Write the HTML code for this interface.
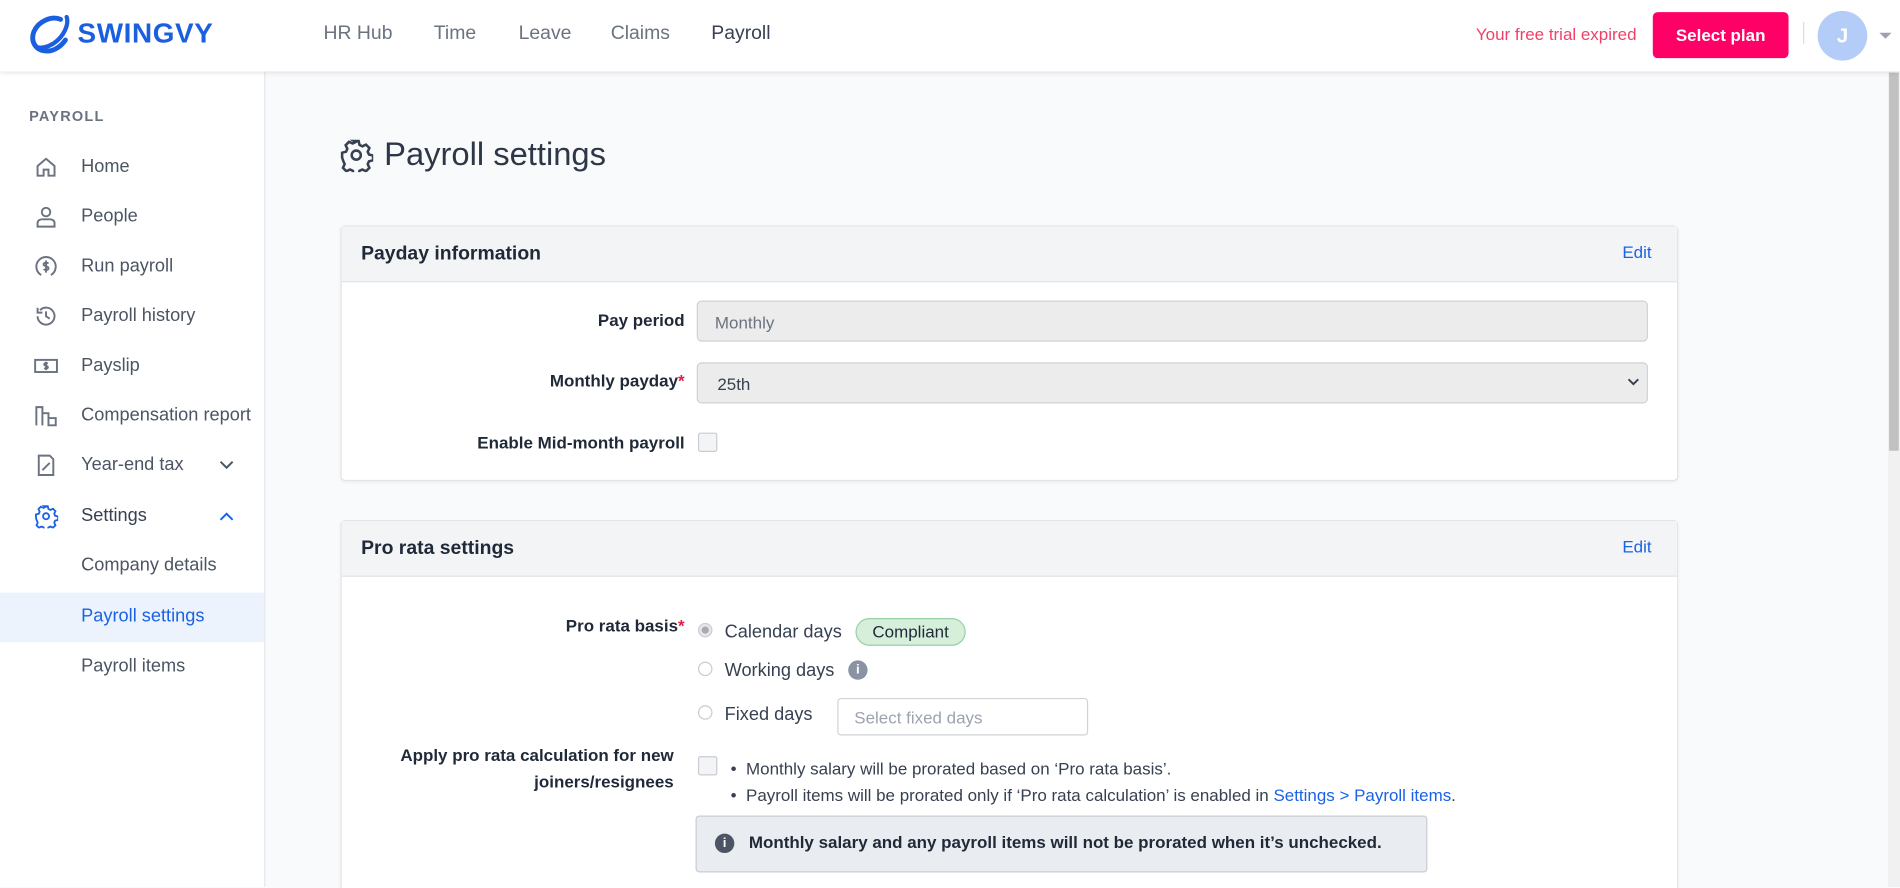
<!DOCTYPE html>
<html><head><meta charset="utf-8"><style>
*{box-sizing:border-box;margin:0;padding:0}
html,body{width:1900px;height:888px;overflow:hidden;background:#f9fafb;font-family:"Liberation Sans",Arial,sans-serif}
#w{position:absolute;left:0;top:0;width:1568px;height:732.8px;overflow:hidden;transform:scale(1.21173);transform-origin:0 0;background:#f9fafb}
.a{position:absolute;white-space:nowrap}
.hdr{position:absolute;left:0;top:0;width:1568px;height:59px;background:#fff;box-shadow:0 1px 4px rgba(0,0,0,.12);z-index:2}
.nav{font-size:16px;color:#6b7280;top:19px}
.side{position:absolute;left:0;top:59px;width:219px;height:673px;background:#fff;border-right:1px solid #e5e7eb}
.si{font-size:15px;color:#4b5563;left:67px}
.ic{position:absolute;left:28px;width:20px;height:20px}
.card{position:absolute;left:281px;width:1104px;background:#fff;border:1px solid #e2e4e8;border-radius:4px;box-shadow:0 1px 2px rgba(0,0,0,.05)}
.ch{height:46px;background:#f3f4f6;border-bottom:1px solid #e2e4e8;position:relative}
.ct{position:absolute;left:16px;top:14px;font-size:16px;font-weight:bold;color:#1f2937}
.ed{position:absolute;right:21px;top:13px;font-size:14px;color:#1a62e6}
.lb{font-size:14px;font-weight:bold;color:#1f2937;text-align:right}
.st{color:#e11d48}
.cb{position:absolute;width:16px;height:16px;border:1px solid #c9ccd2;background:#f3f4f6;border-radius:2px}
.rd{position:absolute;width:12px;height:12px;border:1px solid #c9ccd2;border-radius:50%;background:#fff}
.tx{font-size:15px;color:#374151}
</style></head><body><div id="w">
<div class="hdr">
 <svg class="a" style="left:24px;top:12px" width="36" height="34" viewBox="0 0 36 34"><path d="M26 4C19 1 8 5 4 14c-3 8 1 15 9 16 6 1 13-3 17-9" fill="none" stroke="#1a5fe0" stroke-width="4" stroke-linecap="round"/><path d="M31 2c2 6-2 16-11 22-5 3-10 4-13 3" fill="none" stroke="#1a5fe0" stroke-width="3.5" stroke-linecap="round"/></svg>
 <div class="a" style="left:64px;top:14px;font-size:23px;font-weight:bold;color:#1a5fe0;letter-spacing:0.5px">SWINGVY</div>
 <div class="a nav" style="left:267px">HR Hub</div>
 <div class="a nav" style="left:358px">Time</div>
 <div class="a nav" style="left:428px">Leave</div>
 <div class="a nav" style="left:504px">Claims</div>
 <div class="a nav" style="left:587px;color:#374151">Payroll</div>
 <div class="a" style="left:1218px;top:20px;font-size:14px;color:#f0406a">Your free trial expired</div>
 <div class="a" style="left:1364px;top:10px;width:112px;height:38px;background:#ff0066;border-radius:4px;color:#fff;font-size:14px;font-weight:bold;text-align:center;line-height:38px">Select plan</div>
 <div class="a" style="left:1488px;top:18px;width:1px;height:18px;background:#d8dce2"></div>
 <div class="a" style="left:1500px;top:9px;width:41px;height:41px;border-radius:50%;background:#b4cdf8;color:#fff;font-size:17px;font-weight:bold;text-align:center;line-height:41px">J</div>
 <div class="a" style="left:1551px;top:27px;width:0;height:0;border-left:5px solid transparent;border-right:5px solid transparent;border-top:5px solid #9ca3af"></div>
</div>
<div class="a" style="left:1558px;top:59px;width:10px;height:673px;background:#f1f1f1"></div>
<div class="a" style="left:1559px;top:60px;width:8px;height:312px;background:#c1c1c1"></div>
<div class="side">
 <div class="a" style="left:24px;top:30px;font-size:12px;font-weight:bold;color:#6b7280;letter-spacing:1px">PAYROLL</div>
 <svg class="ic" style="top:69px" viewBox="0 0 20 20" fill="none" stroke="#6b7280" stroke-width="1.6"><path d="M3 9l7-6 7 6v8h-5v-5H8v5H3z"/></svg>
 <div class="a si" style="top:70px">Home</div>
 <svg class="ic" style="top:110px" viewBox="0 0 20 20" fill="none" stroke="#6b7280" stroke-width="1.6"><circle cx="10" cy="6" r="3.5"/><path d="M3 18v-3c0-2 2-3 4-3h6c2 0 4 1 4 3v3z"/></svg>
 <div class="a si" style="top:111px">People</div>
 <svg class="ic" style="top:151px" viewBox="0 0 20 20" fill="none" stroke="#6b7280" stroke-width="1.6"><path d="M14 17a8 8 0 1 0-8 0"/><path d="M12 7.5c-1-1-4-1-4 .8s4 1 4 3-3 1.8-4 .8M10 5v10"/></svg>
 <div class="a si" style="top:152px">Run payroll</div>
 <svg class="ic" style="top:192px" viewBox="0 0 20 20" fill="none" stroke="#6b7280" stroke-width="1.6"><path d="M3 10a7 7 0 1 0 2-5M3 3v4h4M10 6v4l3 2"/></svg>
 <div class="a si" style="top:193px">Payroll history</div>
 <svg class="ic" style="top:233px" viewBox="0 0 20 20" fill="none" stroke="#6b7280" stroke-width="1.6"><rect x="1" y="5" width="18" height="10"/><path d="M11.5 8c-1-.6-3-.5-3 .8s3 .8 3 2.2-2 1.4-3 .8M10 6.5v7"/></svg>
 <div class="a si" style="top:234px">Payslip</div>
 <svg class="ic" style="top:274px" viewBox="0 0 20 20" fill="none" stroke="#6b7280" stroke-width="1.6"><path d="M2 18V3h5v15M7 18V8h5v10M12 18v-6h6v6z"/></svg>
 <div class="a si" style="top:275px">Compensation report</div>
 <svg class="ic" style="top:315px" viewBox="0 0 20 20" fill="none" stroke="#6b7280" stroke-width="1.6"><path d="M4 2h9l3 3v13H4z"/><path d="M7 14l6-6M7.5 8.5h.1M12.5 13.5h.1"/></svg>
 <div class="a si" style="top:316px">Year-end tax</div>
 <svg class="a" style="left:181px;top:321px" width="12" height="8" viewBox="0 0 12 8" fill="none" stroke="#4b5563" stroke-width="1.6"><path d="M1 1l5 5 5-5"/></svg>
 <svg class="ic" style="top:357px" viewBox="0 0 24 24" fill="none" stroke="#1a62e6" stroke-width="1.8"><circle cx="12" cy="12" r="3"/><path d="M10.3 2h3.4l.6 2.8 2 1 2.6-1.2 2.4 2.4-1.2 2.6.9 2 2.9.7v3.4l-2.9.7-.9 2 1.2 2.6-2.4 2.4-2.6-1.2-2 .9-.6 2.9h-3.4l-.7-2.9-2-.9-2.6 1.2-2.4-2.4 1.2-2.6-.9-2L2 13.7v-3.4l2.8-.7.9-2-1.2-2.6 2.4-2.4 2.6 1.2 2-1z"/></svg>
 <div class="a si" style="top:358px;color:#374151">Settings</div>
 <svg class="a" style="left:181px;top:363px" width="12" height="8" viewBox="0 0 12 8" fill="none" stroke="#1a62e6" stroke-width="1.6"><path d="M1 7l5-5 5 5"/></svg>
 <div class="a si" style="top:399px">Company details</div>
 <div class="a" style="left:0;top:430px;width:218px;height:41px;background:#edf3fd"></div>
 <div class="a si" style="top:441px;color:#1a62e6">Payroll settings</div>
 <div class="a si" style="top:482px">Payroll items</div>
</div>
<svg class="a" style="left:280px;top:114px" width="28" height="28" viewBox="0 0 24 24" fill="none" stroke="#374151" stroke-width="1.8"><circle cx="12" cy="12" r="3.2"/><path d="M10.3 2h3.4l.6 2.8 2 1 2.6-1.2 2.4 2.4-1.2 2.6.9 2 2.9.7v3.4l-2.9.7-.9 2 1.2 2.6-2.4 2.4-2.6-1.2-2 .9-.6 2.9h-3.4l-.7-2.9-2-.9-2.6 1.2-2.4-2.4 1.2-2.6-.9-2L2 13.7v-3.4l2.8-.7.9-2-1.2-2.6 2.4-2.4 2.6 1.2 2-1z"/></svg>
<div class="a" style="left:317px;top:112px;font-size:27px;color:#2d3748">Payroll settings</div>

<div class="card" style="top:186px;height:211px">
 <div class="ch"><div class="ct">Payday information</div><div class="ed">Edit</div></div>
 <div class="a lb" style="right:819px;top:69px">Pay period</div>
 <div class="a" style="left:293px;top:61px;width:785px;height:34px;background:#ececec;border:1px solid #cfd2d6;border-radius:4px;font-size:14px;color:#6b7280;padding:9px 14px">Monthly</div>
 <div class="a lb" style="right:819px;top:119px">Monthly payday<span class="st">*</span></div>
 <div class="a" style="left:293px;top:112px;width:785px;height:34px;background:#ececec;border:1px solid #cfd2d6;border-radius:4px;font-size:14px;color:#374151;padding:9px 16px">25th</div>
 <svg class="a" style="left:1061px;top:125px" width="10" height="7" viewBox="0 0 10 7" fill="none" stroke="#374151" stroke-width="1.6"><path d="M1 1l4 4 4-4"/></svg>
 <div class="a lb" style="right:819px;top:170px">Enable Mid-month payroll</div>
 <div class="cb" style="left:294px;top:170px"></div>
</div>

<div class="card" style="top:429px;height:303.5px;border-bottom:none;border-radius:4px 4px 0 0">
 <div class="ch"><div class="ct">Pro rata settings</div><div class="ed">Edit</div></div>
 <div class="a lb" style="right:819px;top:78px">Pro rata basis<span class="st">*</span></div>
 <div class="rd" style="left:294px;top:84px;background:#e5e7eb"><div style="width:6px;height:6px;border-radius:50%;background:#aaa;margin:2px"></div></div>
 <div class="a tx" style="left:316px;top:83px">Calendar days</div>
 <div class="a" style="left:424px;top:80px;width:91px;height:23px;background:#d6efdb;border:1px solid #98cfa3;border-radius:12px;font-size:14px;color:#1f2937;text-align:center;line-height:21px">Compliant</div>
 <div class="rd" style="left:294px;top:116px"></div>
 <div class="a tx" style="left:316px;top:115px">Working days</div>
 <div class="a" style="left:418px;top:115px;width:16px;height:16px;border-radius:50%;background:#8a93a3;color:#fff;font-size:11px;font-weight:bold;text-align:center;line-height:16px">i</div>
 <div class="rd" style="left:294px;top:152px"></div>
 <div class="a tx" style="left:316px;top:151px">Fixed days</div>
 <div class="a" style="left:409px;top:146px;width:207px;height:31px;border:1px solid #cfd2d6;border-radius:3px;font-size:14px;color:#9ca3af;padding:7px 13px">Select fixed days</div>
 <div class="a lb" style="right:828px;top:182px;line-height:22px">Apply pro rata calculation for new<br>joiners/resignees</div>
 <div class="cb" style="left:294px;top:194px"></div>
 <div class="a" style="left:321px;top:193px;font-size:14px;color:#374151;line-height:22px">•&nbsp;&nbsp;Monthly salary will be prorated based on ‘Pro rata basis’.<br>•&nbsp;&nbsp;Payroll items will be prorated only if ‘Pro rata calculation’ is enabled in <span style="color:#1a62e6">Settings &gt; Payroll items</span>.</div>
 <div class="a" style="left:292px;top:243px;width:604px;height:47px;background:#e9ecf1;border:1px solid #c9ccd2;border-radius:3px"></div>
 <div class="a" style="left:308px;top:258px;width:16px;height:16px;border-radius:50%;background:#4b5563;color:#fff;font-size:11px;font-weight:bold;text-align:center;line-height:16px">i</div>
 <div class="a" style="left:336px;top:257px;font-size:14px;color:#1f2937;font-weight:bold">Monthly salary and any payroll items will not be prorated when it’s unchecked.</div>
</div>
</div></body></html>
